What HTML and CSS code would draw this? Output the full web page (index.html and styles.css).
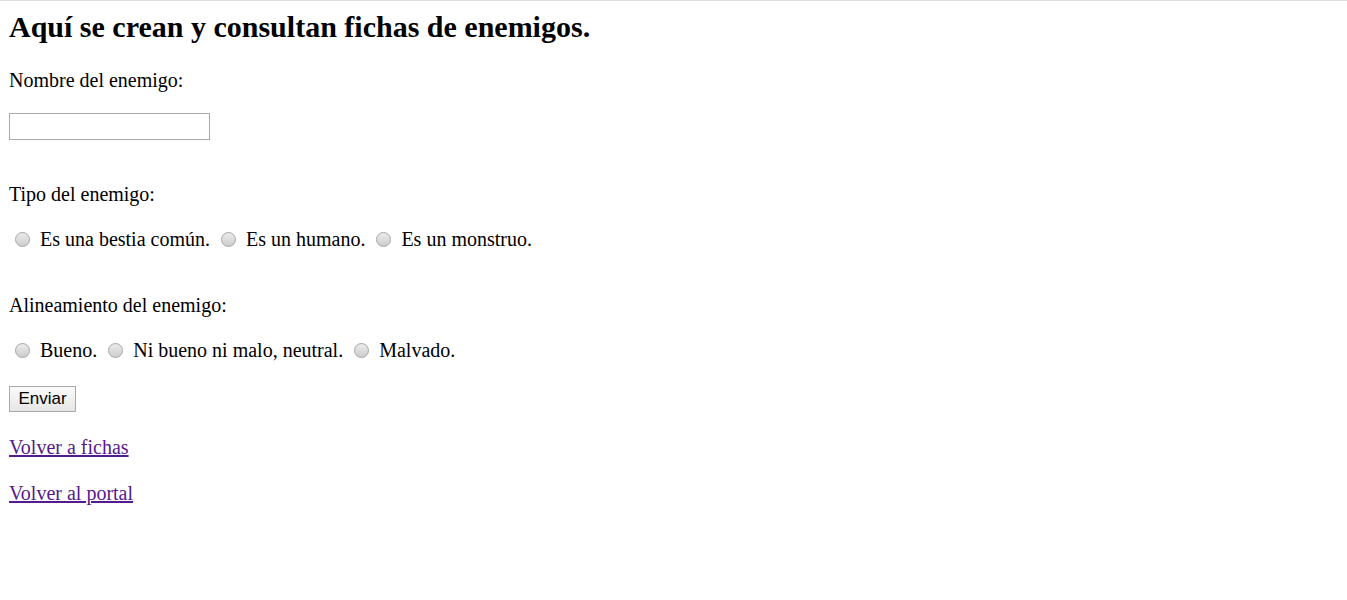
FILE: index.html
```html
<!DOCTYPE html>
<html lang="es">
<head>
<meta charset="utf-8">
<title>Fichas de enemigos</title>
<link rel="stylesheet" href="styles.css">
</head>
<body class="page">
<div class="topline"></div>
<main class="content">
  <h2 class="title">Aquí se crean y consultan fichas de enemigos.</h2>
  <form class="enemy-form">
    <p class="label">Nombre del enemigo:</p>
    <div class="field"><input class="text-input" type="text" name="nombre"></div>

    <p class="label">Tipo del enemigo:</p>
    <div class="radio-row">
      <input class="radio" type="radio" name="tipo" id="t1"><label for="t1">Es una bestia común.</label>
      <input class="radio" type="radio" name="tipo" id="t2"><label for="t2">Es un humano.</label>
      <input class="radio" type="radio" name="tipo" id="t3"><label for="t3">Es un monstruo.</label>
    </div>

    <p class="label">Alineamiento del enemigo:</p>
    <div class="radio-row radio-row-last">
      <input class="radio" type="radio" name="alin" id="a1"><label for="a1">Bueno.</label>
      <input class="radio" type="radio" name="alin" id="a2"><label for="a2">Ni bueno ni malo, neutral.</label>
      <input class="radio" type="radio" name="alin" id="a3"><label for="a3">Malvado.</label>
    </div>

    <div class="actions"><button class="submit" type="submit">Enviar</button></div>
  </form>
  <p class="link-line"><a class="nav-link" href="#">Volver a fichas</a></p>
  <p class="link-line"><a class="nav-link" href="#">Volver al portal</a></p>
</main>
</body>
</html>
```

FILE: styles.css
```css
.page {
  margin: 0;
  background: #ffffff;
  color: #000000;
  font-family: "Liberation Serif", "Times New Roman", serif;
  font-size: 20px;
  line-height: 23px;
}

.topline {
  height: 1px;
  background: #dedede;
}

.content {
  padding: 9px 9px 0 9px;
}

.title {
  margin: 0 0 25px 0;
  font-size: 30px;
  line-height: 34px;
  font-weight: bold;
}

.enemy-form {
  margin: 0;
}

.label {
  margin: 0;
}

.field {
  margin: 21px 0 43px 0;
  height: 27px;
}

.text-input {
  box-sizing: border-box;
  width: 201px;
  height: 27px;
  margin: 0;
  padding: 1px 3px;
  border: 1px solid #a9a9a9;
  background: #ffffff;
  font-family: "Liberation Sans", Arial, sans-serif;
  font-size: 13px;
}

.radio-row {
  margin: 22px 0 43px 0;
  height: 23px;
  white-space: nowrap;
}

.radio-row-last {
  margin-bottom: 24px;
}

.radio {
  appearance: none;
  -webkit-appearance: none;
  box-sizing: border-box;
  width: 15px;
  height: 15px;
  margin: 0 10px 0 6px;
  border: 1px solid #a6a6a6;
  border-radius: 50%;
  background: linear-gradient(#ebebeb, #cdcdcd);
  vertical-align: -1px;
}

.actions {
  height: 26px;
  margin-bottom: 24px;
}

.submit {
  box-sizing: border-box;
  height: 26px;
  width: 67px;
  margin: 0;
  padding: 0;
  border: 1px solid #a9a9a9;
  border-radius: 0;
  background: linear-gradient(#fbfbfb, #e6e6e6);
  color: #000000;
  font-family: "Liberation Sans", Arial, sans-serif;
  font-size: 17px;
}

.link-line {
  margin: 0 0 23px 0;
}

.nav-link {
  color: #551a8b;
  text-decoration: underline;
}
```
